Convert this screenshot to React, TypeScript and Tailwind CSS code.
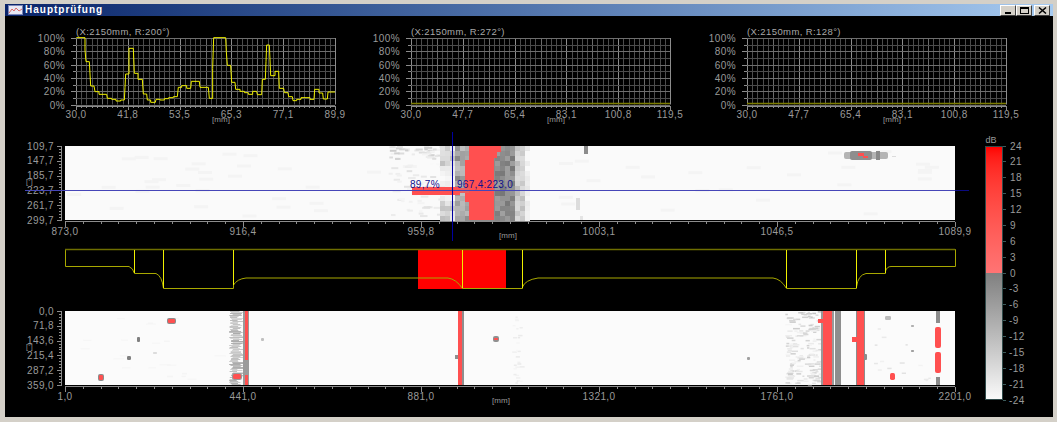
const GRID = "#4c4c4c";
const GRID_MAJOR = "#8c8c8c";
const LABEL = "fill-[#9a9a9a] text-[10px] tracking-[0.4px]";

// deterministic noise so the heat maps stay the same on every render
function makeRand(seed: number) {
  let s = seed;
  return () => {
    s = (s * 1664525 + 1013904223) % 4294967296;
    return s / 4294967296;
  };
}

function range(from: number, to: number, step: number) {
  const out: number[] = [];
  for (let v = from; v <= to + 0.001; v += step) out.push(v);
  return out;
}

// traced from the reference at 3x, hence the division below
const trace = [
  [229, 113], [255, 113], [255, 150], [258, 185], [268, 185], [272, 258], [282, 258], [285, 275], [297, 275], [297, 283],
  [320, 283], [322, 295], [335, 295], [335, 298], [348, 298], [348, 303], [362, 303], [362, 300], [373, 300], [375, 262],
  [377, 222], [387, 222], [387, 145], [400, 145], [403, 220], [414, 220], [414, 238], [427, 238], [430, 282], [440, 282],
  [442, 300], [452, 300], [452, 307], [466, 307], [468, 298], [480, 298], [480, 300], [493, 300], [493, 296], [506, 296],
  [506, 293], [520, 293], [520, 290], [532, 290], [535, 262], [545, 262], [545, 257], [560, 257], [560, 265], [572, 265],
  [574, 244], [598, 244], [600, 262], [625, 262], [628, 295], [638, 295], [638, 205], [641, 113], [677, 113], [679, 155],
  [682, 196], [692, 196], [695, 247], [705, 247], [707, 268], [720, 268], [720, 274], [733, 274], [733, 278], [745, 278],
  [745, 283], [758, 283], [758, 274], [770, 274], [772, 284], [785, 284], [787, 238], [796, 238], [798, 185], [800, 135],
  [808, 135], [810, 180], [812, 227], [825, 227], [825, 214], [836, 214], [838, 265], [851, 265], [853, 278], [864, 278],
  [866, 290], [877, 290], [879, 302], [890, 302], [890, 298], [903, 298], [903, 293], [930, 293], [930, 298], [942, 298],
  [944, 268], [957, 268], [957, 279], [968, 279], [970, 297], [982, 297], [984, 276], [1005, 276],
];

function LineChart({ left, title, labels, points, dim }: { left: number; title: string; labels: string[]; points: string; dim?: boolean }) {
  const x0 = left + 41;
  const w = 259;
  const top = 38;
  const bottom = 104.5;
  return (
    <svg width={320} height={102} viewBox={`${left} 24 320 102`} className="block shrink-0">
      <text x={x0} y={35} className="fill-[#a8a8a8] text-[9.5px] tracking-[0.4px]">{title}</text>
      {range(0, 50, 1).map((i) => {
        const x = Math.round(x0 + (i * w) / 50) + 0.5;
        return (
          <g key={i}>
            <line x1={x} x2={x} y1={top} y2={bottom} stroke={i % 10 === 0 ? GRID_MAJOR : i % 5 === 0 ? "#6a6a6a" : GRID} />
            <line x1={x} x2={x} y1={106} y2={i % 10 === 0 ? 110 : 108} stroke="#8c8c8c" />
          </g>
        );
      })}
      {range(0, 10, 1).map((i) => {
        const y = Math.round(top + (i * 66.5) / 10) + 0.5;
        return (
          <g key={i}>
            <line x1={x0} x2={x0 + w} y1={y} y2={y} stroke={i % 2 === 0 ? "#6e6e6e" : GRID} />
            <line x1={x0 - (i % 2 === 0 ? 5 : 3)} x2={x0} y1={y} y2={y} stroke="#8c8c8c" />
          </g>
        );
      })}
      <line x1={x0} x2={x0 + w} y1={106.5} y2={106.5} stroke="#8c8c8c" />
      {["100%", "80%", "60%", "40%", "20%", "0%"].map((t, i) => (
        <text key={t} x={x0 - 11} y={42 + i * 13.3} textAnchor="end" className={LABEL}>{t}</text>
      ))}
      {labels.map((t, i) => (
        <text key={t} x={x0 + (i * w) / 5} y={118} textAnchor="middle" className={LABEL}>{t}</text>
      ))}
      <text x={x0 + 145} y={122} textAnchor="middle" className="fill-[#9a9a9a] text-[8px]">[mm]</text>
      <polyline points={points} fill="none" stroke={dim ? "#7c7c00" : "#f0f000"} strokeWidth={dim ? 1.5 : 1} />
    </svg>
  );
}

function HeatAxes({ y0, y1, ys, xs, unitX }: { y0: number; y1: number; ys: string[]; xs: string[]; unitX: number }) {
  const x0 = 65;
  const x1 = 955;
  const minor = (x1 - x0) / 50;
  return (
    <g>
      <line x1={x0} x2={x1} y1={y1 + 1.5} y2={y1 + 1.5} stroke="#8c8c8c" />
      {range(0, 50, 1).map((i) => {
        const x = Math.round(x0 + i * minor) + 0.5;
        return <line key={i} x1={x} x2={x} y1={y1 + 2} y2={i % 10 === 0 ? y1 + 7 : y1 + 4} stroke="#8c8c8c" />;
      })}
      <line x1={x0 - 3.5} x2={x0 - 3.5} y1={y0} y2={y1} stroke="#8c8c8c" />
      {range(0, 25, 1).map((i) => {
        const y = Math.round(y0 + (i * (y1 - y0)) / 25) + 0.5;
        return <line key={i} x1={x0 - (i % 5 === 0 ? 8 : 6)} x2={x0 - 3} y1={y} y2={y} stroke="#8c8c8c" />;
      })}
      {ys.map((t, i) => (
        <text key={t} x={x0 - 11} y={y0 + 3.5 + (i * (y1 - y0)) / 5} textAnchor="end" className={LABEL}>{t}</text>
      ))}
      <text x={x0 - 39} y={y0 + 38} className="fill-[#9a9a9a] text-[7px]">[°]</text>
      {xs.map((t, i) => (
        <text key={t} x={x0 + (i * (x1 - x0)) / 5} y={y1 + 15} textAnchor="middle" className={LABEL}>{t}</text>
      ))}
      <text x={unitX} y={y1 + 18} textAnchor="middle" className="fill-[#9a9a9a] text-[8px]">[mm]</text>
    </g>
  );
}

function grayShade(v: number) {
  const c = Math.max(0, Math.min(255, Math.round(v)));
  return `rgb(${c},${c},${c})`;
}

function topCells() {
  const rand = makeRand(11);
  const cells: { x: number; y: number; w: number; h: number; c: string }[] = [];
  // sparse streaks left of the defect
  for (let i = 0; i < 90; i++) {
    const y = rand() < 0.4 ? 146 + rand() * 12 : 146 + rand() * 72;
    const x = 388 + rand() * 52;
    cells.push({ x, y, w: 3 + rand() * 5, h: 2, c: grayShade(y < 158 ? 205 + rand() * 40 : 225 + rand() * 25) });
  }
  for (let y = 146; y < 220; y += 5) {
    for (let x = 440; x < 530; x += 5) {
      const r = rand();
      const edge = y < 165 || y > 197;
      let v = 250;
      if (x < 452) v = edge ? 190 + r * 45 : 230 + r * 20;
      else if (x < 468) v = 135 + r * 60;
      else if (x < 494) v = 140;
      else if (x < 515) v = 118 + r * 42;
      else if (x < 523) v = 185 + r * 35;
      else v = 228 + r * 22;
      cells.push({ x, y, w: 5, h: 5, c: grayShade(v) });
    }
  }
  return cells;
}

function TopHeat() {
  const noise = makeRand(5);
  return (
    <svg width={1000} height={112} viewBox="5 130 1000 112" className="block -mr-[30px]">
      <rect x={65} y={146} width={890} height={74} fill="#fafafa" />
      {range(0, 60, 1).map((i) => (
        <rect key={i} x={65 + noise() * 870} y={146 + noise() * 70} width={14} height={3} fill="#f4f4f4" />
      ))}
      {topCells().map((c, i) => (
        <rect key={i} x={c.x} y={c.y} width={c.w} height={c.h} fill={c.c} />
      ))}
      {/* defect band */}
      <rect x={469} y={146} width={25} height={74} fill="#ff5050" />
      <rect x={494} y={146} width={7} height={6} fill="#ff5050" />
      <rect x={494} y={152} width={3} height={6} fill="#ff5050" />
      <rect x={465} y={160} width={4} height={42} fill="#ff5050" />
      <rect x={412} y={187} width={48} height={8} fill="#ff5050" />
      <rect x={460} y={188} width={9} height={5} fill="#e86060" />
      <rect x={584} y={146} width={4} height={8} fill="#8c8c8c" />
      <rect x={576} y={198} width={4} height={12} fill="#dcdcdc" />
      <rect x={580} y={216} width={3} height={4} fill="#e4e4e4" />
      {/* spot at the right */}
      <rect x={844} y={152} width={44} height={7} rx={2} fill="#b4b4b4" />
      <rect x={850} y={151} width={22} height={9} rx={2} fill="#8e8e8e" />
      <rect x={876} y={151} width={4} height={9} fill="#8a8a8a" />
      <rect x={858} y={153} width={6} height={3} fill="#ff5050" />
      <rect x={863} y={156} width={5} height={2} fill="#ff5050" />
      <rect x={892} y={156} width={4} height={1} fill="#dcdcdc" />
      <HeatAxes y0={146} y1={220} ys={["109,7", "147,7", "185,7", "223,7", "261,7", "299,7"]} xs={["873,0", "916,4", "959,8", "1003,1", "1046,5", "1089,9"]} unitX={508} />
      <line x1={25} x2={955} y1={190.5} y2={190.5} stroke="#4646b8" />
      <line x1={955} x2={969} y1={190.5} y2={190.5} stroke="#0a0a80" />
      <line x1={452.5} x2={452.5} y1={132} y2={241} stroke="#0000a0" />
      <text x={410} y={188} className="fill-[#10108c] text-[10px] tracking-[0.3px]">89,7%</text>
      <text x={457} y={188} className="fill-[#10108c] text-[10px] tracking-[0.3px]">967,4:223,0</text>
    </svg>
  );
}

function Speck({ x, y, w, h, c }: { x: number; y: number; w: number; h: number; c: string }) {
  return <rect x={x} y={y} width={w} height={h} rx={Math.min(w, h) / 3} fill={c} />;
}

function bottomNoise() {
  const rand = makeRand(23);
  const out: { x: number; y: number; w: number; c: string }[] = [];
  for (let y = 311; y < 385; y += 1) {
    out.push({ x: 229 + rand() * 4, y, w: 7 + rand() * 7, c: grayShade(170 + rand() * 50) });
  }
  for (let i = 0; i < 170; i++) {
    const y = 311 + rand() * 73;
    const x = 785 + rand() * 36;
    out.push({ x, y, w: 2 + rand() * 5, c: grayShade(y < 322 ? 190 + rand() * 35 : 205 + rand() * 40) });
  }
  for (let i = 0; i < 14; i++) {
    out.push({ x: 866 + rand() * 66, y: 311 + rand() * 73, w: 2 + rand() * 3, c: grayShade(225 + rand() * 20) });
  }
  for (let i = 0; i < 26; i++) {
    out.push({ x: 512 + rand() * 8, y: 313 + rand() * 70, w: 2 + rand() * 3, c: grayShade(232 + rand() * 15) });
  }
  for (let i = 0; i < 20; i++) {
    out.push({ x: 75 + rand() * 150, y: 312 + rand() * 72, w: 4 + rand() * 8, c: "#f5f5f5" });
  }
  return out;
}

function BottomHeat() {
  const red = "#ff5050";
  return (
    <svg width={1000} height={102} viewBox="5 304 1000 102" className="block -mr-[30px]">
      <rect x={65} y={311} width={890} height={74} fill="#fbfbfb" />
      {bottomNoise().map((n, i) => (
        <rect key={i} x={n.x} y={n.y} width={n.w} height={n.w > 6 && n.x < 250 ? 1 : 1.5} fill={n.c} />
      ))}
      {/* isolated spots */}
      <Speck x={167} y={318} w={9} h={6} c="#8c8c8c" />
      <Speck x={168} y={319} w={7} h={4} c={red} />
      <Speck x={98} y={374} w={6} h={7} c="#8c8c8c" />
      <Speck x={99} y={375} w={4} h={5} c={red} />
      <Speck x={137} y={337} w={3} h={5} c="#808080" />
      <Speck x={127} y={356} w={4} h={4} c="#808080" />
      <Speck x={153} y={352} w={4} h={2} c="#dcdcdc" />
      <Speck x={261} y={338} w={3} h={3} c="#c0c0c0" />
      <Speck x={493} y={336} w={6} h={6} c="#909090" />
      <Speck x={494} y={338} w={4} h={2} c={red} />
      <Speck x={747} y={357} w={3} h={3} c="#a0a0a0" />
      <Speck x={911} y={325} w={3} h={2} c="#b0b0b0" />
      <Speck x={911} y={350} w={3} h={2} c="#a0a0a0" />
      {/* first weld */}
      <rect x={243} y={311} width={6} height={74} fill="#9a9a9a" />
      <rect x={245} y={311} width={3} height={49} fill={red} />
      <rect x={245} y={375} width={3} height={10} fill={red} />
      <Speck x={232} y={373} w={10} h={7} c="#9a9a9a" />
      <Speck x={233} y={374} w={8} h={5} c={red} />
      {/* second weld */}
      <rect x={458} y={311} width={6} height={74} fill="#8e8e8e" />
      <rect x={458} y={311} width={4} height={74} fill={red} />
      <rect x={455} y={355} width={3} height={4} fill="#8e8e8e" />
      {/* right welds */}
      <rect x={821} y={311} width={13} height={74} fill="#9a9a9a" />
      <rect x={823} y={311} width={9} height={74} fill={red} />
      <rect x={818} y={319} width={5} height={4} fill={red} />
      <rect x={835} y={311} width={6} height={74} fill="#8e8e8e" />
      <rect x={856} y={311} width={9} height={74} fill="#8c8c8c" />
      <rect x={857} y={311} width={7} height={74} fill={red} />
      <rect x={852} y={337} width={5} height={5} fill={red} />
      <Speck x={864} y={354} w={3} h={6} c="#8c8c8c" />
      <Speck x={885} y={316} w={6} h={4} c="#bdbdbd" />
      <Speck x={890} y={373} w={5} h={7} c={red} />
      <rect x={936} y={311} width={4} height={12} fill="#8c8c8c" />
      <rect x={936} y={377} width={4} height={8} fill="#8c8c8c" />
      <Speck x={935} y={327} w={6} h={21} c={red} />
      <Speck x={935} y={352} w={6} h={21} c={red} />
      <HeatAxes y0={311} y1={385} ys={["0,0", "71,8", "143,6", "215,4", "287,2", "359,0"]} xs={["1,0", "441,0", "881,0", "1321,0", "1761,0", "2201,0"]} unitX={501} />
    </svg>
  );
}

function Profile() {
  const outline =
    "M65.5 249.5V266.5H129Q133 268 134.5 273.5H156Q162 276 163.5 288.5H233.5V285Q237 279 246 278H448Q456 279 462.5 288.5H522.5V287Q525 280 538 278H773Q781 279 786.5 288.5H856.5V287Q858 275 866 273.5H885.5V271Q887 266.5 891 266.5H955.5V249.5Z";
  return (
    <svg width={970} height={44} viewBox="5 247 970 44" className="block">
      <rect x={418} y={249} width={88} height={40} fill="#ff0000" />
      <path d={outline} fill="none" stroke="#a8a800" />
      <line x1={65} x2={955} y1={249.5} y2={249.5} stroke="#6e6e00" strokeWidth={1.5} />
      {[
        [134.5, 273],
        [163.5, 288],
        [233.5, 285],
        [462.5, 288],
        [522.5, 288],
        [786.5, 288],
        [856.5, 288],
        [885.5, 273],
      ].map(([x, y]) => (
        <line key={x} x1={x} x2={x} y1={250} y2={y} stroke="#f0f000" />
      ))}
    </svg>
  );
}

function ColorBar() {
  const labels = ["24", "21", "18", "15", "12", "9", "6", "3", "0", "-3", "-6", "-9", "-12", "-15", "-18", "-21", "-24"];
  return (
    <div className="flex flex-col pt-[5px]">
      <div className="h-[11px] w-[12px] ml-[-1px] pl-0 text-center text-[9px] leading-[11px] text-[#9a9a9a] ml-[0px]">dB</div>
      <div className="flex">
        <div className="flex flex-col w-[18px] h-[254px] border border-[#2f4a4a]">
          <div className="h-1/2 bg-gradient-to-b from-[#ff0000] to-[#ff7474]" />
          <div className="h-1/2 bg-gradient-to-b from-[#808080] to-[#fafafa]" />
        </div>
        <div className="flex flex-col justify-between h-[254px]">
          {labels.map((t) => (
            <div key={t} className="flex items-center h-0 text-[10px] tracking-[0.4px] text-[#9a9a9a]">
              <span className="w-[3px] h-px bg-[#3c5a5a] mr-[3px]" />
              <span className={t.startsWith("-") ? "" : "ml-[1px]"}>{t}</span>
            </div>
          ))}
        </div>
      </div>
    </div>
  );
}

function WinButton({ children }: { children: React.ReactNode }) {
  return (
    <div className="flex items-center justify-center w-[16px] h-[11px] bg-[#d4d0c8] border border-t-white border-l-white border-r-[#404040] border-b-[#404040]">
      {children}
    </div>
  );
}

function TitleBar() {
  return (
    <div className="flex items-center h-[12px] pl-[3px] pr-[3px] bg-gradient-to-r from-[#0a246a] to-[#a6caf0]">
      <svg width={15} height={10} viewBox="0 0 15 10" className="mr-[2px] shrink-0">
        <rect width={15} height={10} fill="#e8e8f4" />
        <rect x={0.5} y={0.5} width={14} height={9} fill="none" stroke="#7a86b8" />
        <polyline points="1,8 4,4 6,6 8,3 11,6 14,4" fill="none" stroke="#d86a6a" />
      </svg>
      <span className="text-[10px] leading-[12px] font-bold tracking-[1px] text-white">Hauptprüfung</span>
      <div className="ml-auto flex items-center">
        <WinButton>
          <span className="block w-[6px] h-[2px] mt-[5px] bg-black" />
        </WinButton>
        <WinButton>
          <span className="block w-[9px] h-[7px] border border-black border-t-2" />
        </WinButton>
        <div className="w-[2px]" />
        <WinButton>
          <svg width={9} height={7} viewBox="0 0 9 7">
            <path d="M1 0.5L8 6.5M8 0.5L1 6.5" stroke="#000" strokeWidth={1.5} />
          </svg>
        </WinButton>
      </div>
    </div>
  );
}

export default function App() {
  const main = trace.map(([x, y]) => `${x / 3},${y / 3}`).join(" ");
  const flat = (x0: number) => range(0, 259, 7).map((d) => `${x0 + d},103.5`).join(" ");
  return (
    <div className="flex flex-col w-[1057px] h-[422px] pl-[5px] pr-[4px] pt-[4px] pb-[5px] bg-[#d4d0c8] font-['Liberation_Sans',Arial,sans-serif] overflow-hidden">
      <TitleBar />
      <div className="flex-1 bg-black overflow-hidden">
        <div className="flex gap-[15px] pl-[30px] pt-[8px]">
          <LineChart left={35} title="(X:2150mm, R:200°)" labels={["30,0", "41,8", "53,5", "65,3", "77,1", "89,9"]} points={main} />
          <LineChart left={370} title="(X:2150mm, R:272°)" labels={["30,0", "47,7", "65,4", "83,1", "100,8", "119,5"]} points={flat(411)} dim />
          <div className="ml-px">
            <LineChart left={706} title="(X:2150mm, R:128°)" labels={["30,0", "47,7", "65,4", "83,1", "100,8", "119,5"]} points={flat(747)} dim />
          </div>
        </div>
        <div className="flex mt-[4px]">
          <div className="flex flex-col w-[980px]">
            <TopHeat />
            <div className="mt-[5px]">
              <Profile />
            </div>
            <div className="mt-[13px]">
              <BottomHeat />
            </div>
          </div>
          <ColorBar />
        </div>
      </div>
    </div>
  );
}
